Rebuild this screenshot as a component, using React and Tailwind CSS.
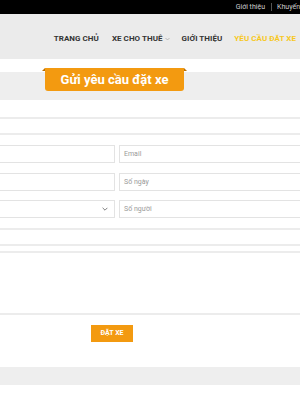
import React from 'react';

export default function App() {
  const font = { fontFamily: 'Roboto, "Noto Sans", sans-serif' };
  const inputCls =
    'h-[18px] w-full border border-[#e3e3e3] bg-white px-[4px] text-[7px] text-[#9a9a9a] flex items-center';

  return (
    <div className="w-[300px] h-[400px] overflow-hidden bg-white relative" style={font}>
      {/* Top bar */}
      <div className="h-[14px] bg-black flex items-center justify-end text-[7px] text-[#cfcfcf] whitespace-nowrap">
        <span className="mr-[6px]">Giới thiệu</span>
        <span className="w-px h-[8px] bg-[#555] mr-[5px]"></span>
        <span>Khuyến</span>
      </div>

      {/* Header */}
      <div className="h-[45px] bg-[#ebebeb] flex items-center justify-end pt-[4px] text-[8px] font-bold text-[#333] tracking-[0.05px] whitespace-nowrap">
        <span className="mr-[13px]">TRANG CHỦ</span>
        <span className="mr-[12px] flex items-center">
          XE CHO THUÊ
          <svg width="5" height="4" viewBox="0 0 10 6" className="ml-[2px]" fill="none" stroke="#999" strokeWidth="1.2">
            <path d="M1 1l4 4 4-4" />
          </svg>
        </span>
        <span className="mr-[12px]">GIỚI THIỆU</span>
        <span className="text-[#f7c81e] mr-[4px]">YÊU CẦU ĐẶT XE</span>
      </div>

      {/* Title band */}
      <div className="relative pt-[13px]">
        <div className="h-[28px] bg-[#eeeeee]"></div>
        <div className="absolute top-[9px] left-[45px] w-[139px] h-[23px] bg-[#f39a10] rounded-b-[3px] flex items-center justify-center text-white font-bold text-[13px]">
          Gửi yêu cầu đặt xe
          <span className="absolute -left-[3px] top-0 w-0 h-0 border-l-[3px] border-l-transparent border-b-[3px] border-b-[#b86f05]"></span>
          <span className="absolute -right-[3px] top-0 w-0 h-0 border-r-[3px] border-r-transparent border-b-[3px] border-b-[#b86f05]"></span>
        </div>
      </div>

      {/* Form */}
      <div className="ml-[-87px] w-[408px] pt-[17px]">
        <div className="h-[18px] border-y-2 border-[#ececec]"></div>

        <div className="grid grid-cols-2 gap-x-[4px] mt-[10px]">
          <div className={inputCls}></div>
          <div className={inputCls}>Email</div>
        </div>
        <div className="grid grid-cols-2 gap-x-[4px] mt-[10px]">
          <div className={inputCls}></div>
          <div className={inputCls}>Số ngày</div>
        </div>
        <div className="grid grid-cols-2 gap-x-[4px] mt-[9px]">
          <div className={inputCls + ' justify-end pr-[6px]'}>
            <svg width="6" height="4" viewBox="0 0 10 6" fill="none" stroke="#666" strokeWidth="1.4">
              <path d="M1 1l4 4 4-4" />
            </svg>
          </div>
          <div className={inputCls}>Số người</div>
        </div>

        <div className="h-[18px] mt-[10px] border-y-2 border-[#ececec]"></div>
        <div className="h-[64px] mt-[5px] border-y-2 border-[#ececec]"></div>

        <div className="flex mt-[10px]">
          <div className="ml-[178px] w-[42px] h-[17px] bg-[#f39a10] flex items-center justify-center text-white font-bold text-[7px]">
            ĐẶT XE
          </div>
        </div>
      </div>

      <div className="h-[18px] bg-[#eeeeee] mt-[25px]"></div>
    </div>
  );
}
